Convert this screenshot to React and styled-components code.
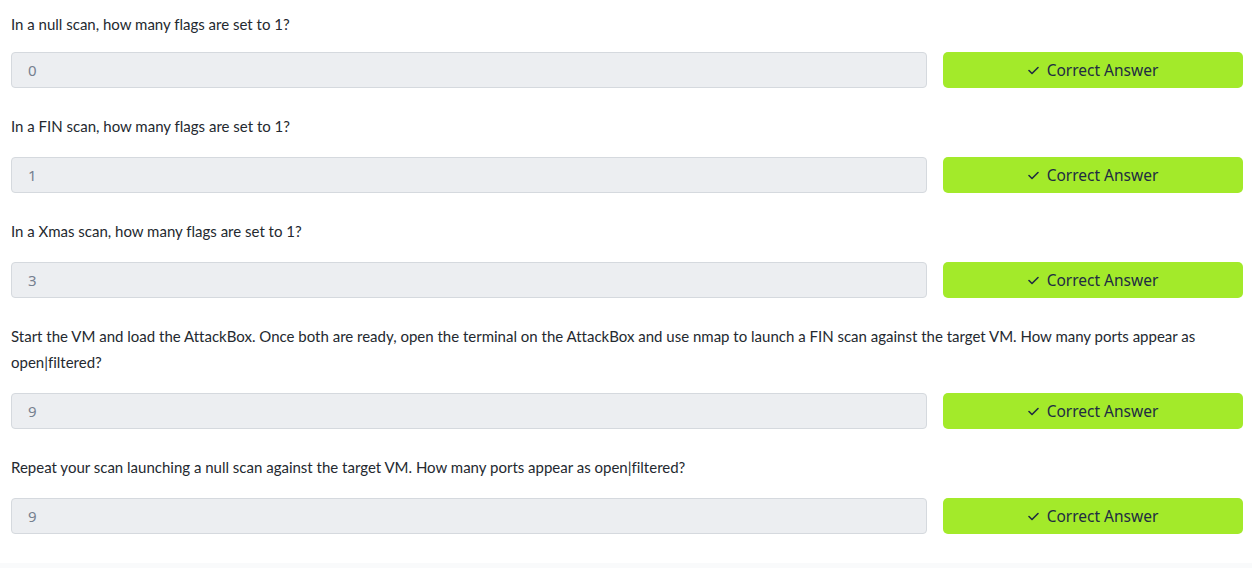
import React from 'react';
import styled, { createGlobalStyle } from 'styled-components';

const GlobalStyle = createGlobalStyle`
  html, body {
    margin: 0;
    padding: 0;
    background: #ffffff;
  }
  body {
    font-family: Lato, "Liberation Sans", sans-serif;
    color: #212529;
    font-variant-ligatures: none;
  }
`;

const Page = styled.div`
  width: 1252px;
  height: 568px;
  display: flex;
  flex-direction: column;
  overflow: hidden;
`;

const Tasks = styled.div`
  height: 563px;
  box-sizing: border-box;
  padding: 11px 9px 0 11px;
  display: flex;
  flex-direction: column;
`;

const Footer = styled.div`
  flex: 1;
  background: #f9fafb;
`;

const Question = styled.div`
  display: flex;
  flex-direction: column;
  margin-bottom: 25px;
`;

const Prompt = styled.p`
  margin: 0 0 ${(p) => (p.$first ? '15px' : '18px')};
  font-size: 15px;
  line-height: 26px;
  color: #24292f;
`;

const AnswerRow = styled.div`
  display: flex;
  gap: 16px;
`;

const AnswerInput = styled.div`
  flex: 1;
  height: 36px;
  box-sizing: border-box;
  border: 1px solid #d5d9de;
  border-radius: 4px;
  background: #eceef1;
  padding: 0 16px;
  display: flex;
  align-items: center;
  font-family: "Noto Sans", "DejaVu Sans", sans-serif;
  font-size: 15px;
  color: #76808f;
`;

const SubmitButton = styled.button`
  width: 300px;
  height: 36px;
  border: none;
  border-radius: 5px;
  background: #a3ea2a;
  color: #212c42;
  display: flex;
  align-items: center;
  justify-content: center;
  gap: 8px;
  font-family: "Noto Sans", "DejaVu Sans", sans-serif;
  font-size: 15.5px;
  cursor: pointer;
`;

const Check = () => (
  <svg width="11" height="9" viewBox="0 0 11 9" fill="none">
    <path d="M1 4.5 L4 7.5 L10 1.5" stroke="#212c42" strokeWidth="1.6" strokeLinecap="round" strokeLinejoin="round" />
  </svg>
);

const questions = [
  { text: 'In a null scan, how many flags are set to 1?', answer: '0' },
  { text: 'In a FIN scan, how many flags are set to 1?', answer: '1' },
  { text: 'In a Xmas scan, how many flags are set to 1?', answer: '3' },
  {
    text: 'Start the VM and load the AttackBox. Once both are ready, open the terminal on the AttackBox and use nmap to launch a FIN scan against the target VM. How many ports appear as open|filtered?',
    answer: '9',
  },
  {
    text: 'Repeat your scan launching a null scan against the target VM. How many ports appear as open|filtered?',
    answer: '9',
  },
];

export default function App() {
  return (
    <Page>
      <GlobalStyle />
      <Tasks>
        {questions.map((q, i) => (
          <Question key={i}>
            <Prompt $first={i === 0}>{q.text}</Prompt>
            <AnswerRow>
              <AnswerInput>{q.answer}</AnswerInput>
              <SubmitButton>
                <Check />
                Correct Answer
              </SubmitButton>
            </AnswerRow>
          </Question>
        ))}
      </Tasks>
      <Footer />
    </Page>
  );
}
